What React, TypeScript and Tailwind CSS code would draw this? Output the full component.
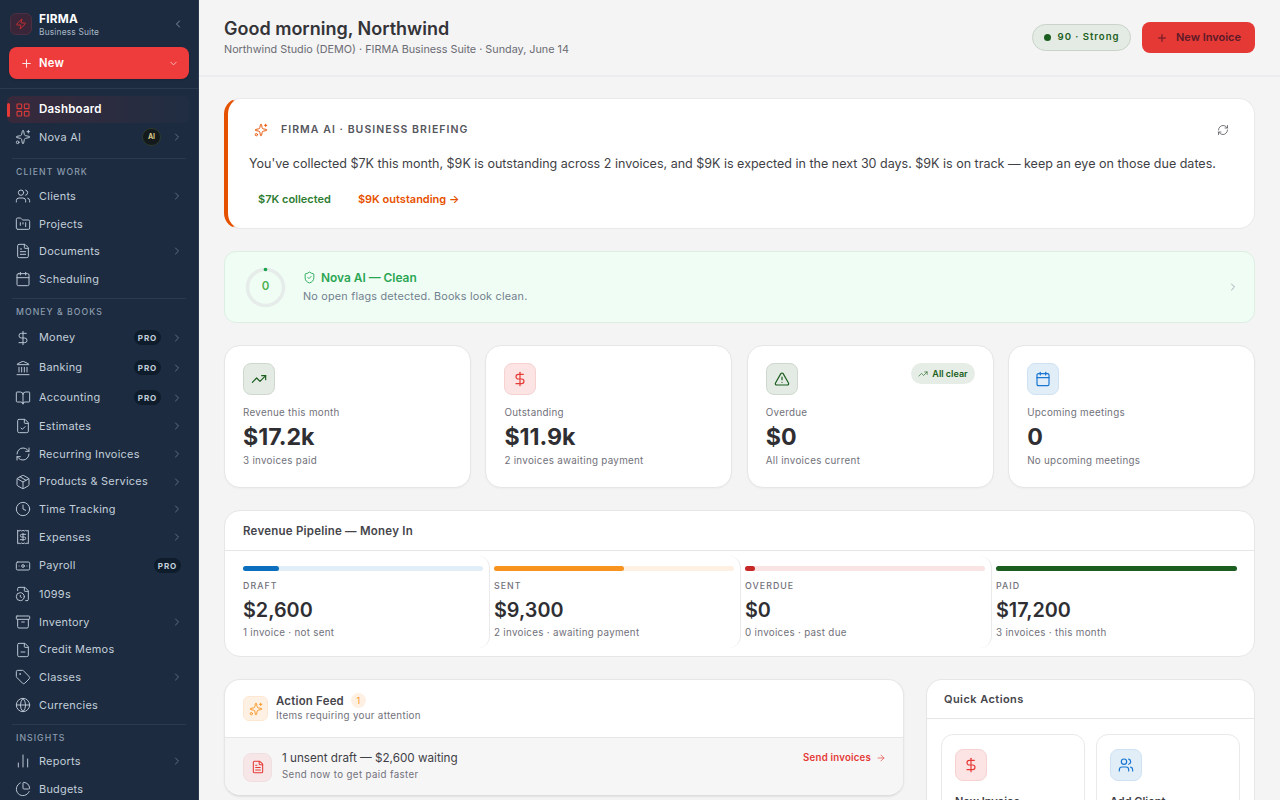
import {
  Archive, ArrowRight, Banknote, BookOpen, Calendar, ChartNoAxesColumn, ChevronDown, ChevronLeft, ChevronRight,
  Clock, DollarSign, FileCheck, FileClock, FileMinus, FileText, FolderKanban, Globe, Landmark, LayoutGrid, Package,
  PieChart, Plus, Receipt, RefreshCw, ShieldCheck, Sparkles, Tag, TrendingUp, TriangleAlert, Users, Zap,
} from 'lucide-react';

const CLIENT_WORK = [
  { label: 'Clients', icon: Users, more: true },
  { label: 'Projects', icon: FolderKanban },
  { label: 'Documents', icon: FileText, more: true },
  { label: 'Scheduling', icon: Calendar },
];

const MONEY_BOOKS = [
  { label: 'Money', icon: DollarSign, more: true, pro: true },
  { label: 'Banking', icon: Landmark, more: true, pro: true },
  { label: 'Accounting', icon: BookOpen, more: true, pro: true },
  { label: 'Estimates', icon: FileCheck, more: true },
  { label: 'Recurring Invoices', icon: RefreshCw, more: true },
  { label: 'Products & Services', icon: Package, more: true },
  { label: 'Time Tracking', icon: Clock, more: true },
  { label: 'Expenses', icon: Receipt, more: true },
  { label: 'Payroll', icon: Banknote, pro: true },
  { label: '1099s', icon: FileClock },
  { label: 'Inventory', icon: Archive, more: true },
  { label: 'Credit Memos', icon: FileMinus },
  { label: 'Classes', icon: Tag, more: true },
  { label: 'Currencies', icon: Globe },
];

const INSIGHTS = [
  { label: 'Reports', icon: ChartNoAxesColumn, more: true },
  { label: 'Budgets', icon: PieChart },
];

const PIPELINE = [
  { label: 'DRAFT', value: '$2,600', note: '1 invoice · not sent', bar: 'bg-[#0b6fbd]', track: 'bg-[#e1eef8]', width: '15%' },
  { label: 'SENT', value: '$9,300', note: '2 invoices · awaiting payment', bar: 'bg-[#f7931e]', track: 'bg-[#fef1e4]', width: '54%' },
  { label: 'OVERDUE', value: '$0', note: '0 invoices · past due', bar: 'bg-[#c62828]', track: 'bg-[#f9e3e3]', width: '4%' },
  { label: 'PAID', value: '$17,200', note: '3 invoices · this month', bar: 'bg-[#1b5e20]', track: 'bg-[#e4ece4]', width: '100%' },
];

type NavItem = { label: string; icon: typeof Users; more?: boolean; pro?: boolean };

function NavRow({ item }: { item: NavItem }) {
  const Icon = item.icon;
  return (
    <div className={`flex items-center pl-[15px] pr-[15px] ${item.pro ? 'h-[30px]' : 'h-[27.6px]'}`}>
      <Icon size={16} strokeWidth={1.5} className="text-[#b9c6d4] shrink-0" />
      <span className="ml-2 flex-1 text-[10.9px] tracking-[0.025em] text-[#c3cfdb]">{item.label}</span>
      {item.pro && (
        <span className={`h-[15px] w-[27px] flex items-center justify-center rounded-full bg-[#0f1c2c] text-[8px] font-bold tracking-[0.12em] text-[#c3cfdb] ${item.more ? '' : 'mr-[2px]'}`}>
          PRO
        </span>
      )}
      {item.more && <ChevronRight size={12} strokeWidth={1.5} className="ml-[10px] text-[#75859a] shrink-0" />}
    </div>
  );
}

function SectionLabel({ children, height }: { children: string; height: string }) {
  return (
    <div className={`pt-[8px] pl-[16px] ${height}`}>
      <div className="text-[8.7px] font-medium tracking-[0.12em] leading-[11px] text-[#8b9bae]">{children}</div>
    </div>
  );
}

function Divider({ gap }: { gap: string }) {
  return <div className={`mx-[12px] h-px bg-[#2a3a4f] ${gap}`} />;
}

function Sidebar() {
  return (
    <aside className="w-[199px] h-full shrink-0 overflow-hidden bg-[#1c2b3f] border-r border-[#2a3a4f]">
      <div className="h-[89px] border-b border-[#2a3a4f] px-[9px] pt-[12px]">
        <div className="flex items-center h-[24px]">
          <div className="ml-px w-[22px] h-[22px] rounded-md bg-[#3a2638] border border-[#4c2f42] flex items-center justify-center">
            <Zap size={12} strokeWidth={1.8} className="text-[#d32f2f]" />
          </div>
          <div className="ml-[7px] flex-1 pt-[3px]">
            <div className="text-[11.8px] leading-[13px] font-bold tracking-[0.02em] text-white">FIRMA</div>
            <div className="text-[8.4px] leading-[13px] tracking-[0.02em] text-[#a9b7c6]">Business Suite</div>
          </div>
          <ChevronLeft size={12} strokeWidth={1.8} className="mr-[5px] text-[#8c9bad]" />
        </div>
        <div className="mt-[11px] h-[32px] rounded-lg bg-[#ee3b3b] flex items-center pl-[11px] pr-[10px] shadow-sm">
          <Plus size={13} strokeWidth={2} className="text-[#fde4e4]" />
          <span className="ml-[6px] flex-1 text-[11.2px] font-semibold tracking-[0.02em] text-white">New</span>
          <ChevronDown size={11} strokeWidth={1.8} className="text-[#fbd0d0]" />
        </div>
      </div>
      <div className="relative mt-[7px] ml-[7px] mr-[8px] h-[27px] flex items-center rounded-md bg-gradient-to-r from-[#38293b] to-[#1f2d42] pl-[9px]">
        <span className="absolute left-0 top-[7px] bottom-[6px] w-[2.5px] rounded-sm bg-[#e53935]" />
        <LayoutGrid size={16} strokeWidth={1.7} className="ml-[-1px] text-[#d93a3a]" />
        <span className="ml-2 text-[11.5px] font-semibold tracking-[0.02em] text-white">Dashboard</span>
      </div>
      <div className="flex items-center h-[28px] pl-[15px] pr-[15px]">
        <Sparkles size={16} strokeWidth={1.5} className="text-[#b9c6d4]" />
        <span className="ml-2 flex-1 text-[10.9px] tracking-[0.025em] text-[#c3cfdb]">Nova AI</span>
        <span className="w-[19px] h-[18px] rounded-full bg-[#141a1c] border border-[#2c3a2f] flex items-center justify-center text-[7px] font-bold text-[#d8c68a]">AI</span>
        <ChevronRight size={12} strokeWidth={1.5} className="ml-[10px] text-[#75859a]" />
      </div>
      <Divider gap="mt-[7px]" />
      <SectionLabel height="h-[23.4px]">CLIENT WORK</SectionLabel>
      {CLIENT_WORK.map((item) => <NavRow key={item.label} item={item} />)}
      <Divider gap="mt-[5.5px]" />
      <SectionLabel height="h-[23.3px]">MONEY &amp; BOOKS</SectionLabel>
      {MONEY_BOOKS.map((item) => <NavRow key={item.label} item={item} />)}
      <Divider gap="mt-[5px]" />
      <SectionLabel height="h-[23px]">INSIGHTS</SectionLabel>
      {INSIGHTS.map((item) => <NavRow key={item.label} item={item} />)}
    </aside>
  );
}

function StatCard({ icon, tint, label, value, note, badge }: { icon: React.ReactNode; tint: string; label: string; value: string; note: string; badge?: boolean }) {
  return (
    <div className="h-[143px] rounded-2xl bg-white border border-[#e6e6e8] px-[18px] pt-[17px] shadow-[0_1px_2px_rgba(0,0,0,0.03)]">
      <div className="flex items-start justify-between">
        <div className={`w-[32px] h-[32px] rounded-lg border flex items-center justify-center ${tint}`}>{icon}</div>
        {badge && (
          <span className="h-[21px] pl-[7px] pr-[7px] rounded-full bg-[#e6ede6] flex items-center gap-[4px] text-[9px] font-semibold text-[#1b5e20]">
            <TrendingUp size={10} strokeWidth={1.5} />
            All clear
          </span>
        )}
      </div>
      <div className="mt-[11px] text-[9.8px] leading-[14px] tracking-[0.03em] text-[#71717a]">{label}</div>
      <div className="mt-[2px] text-[23.2px] leading-[30px] font-bold text-[#2f2f33]">{value}</div>
      <div className="mt-[2px] text-[9.8px] leading-[14px] tracking-[0.03em] text-[#71717a]">{note}</div>
    </div>
  );
}

export default function App() {
  return (
    <div className="flex h-screen w-full overflow-hidden bg-[#f4f4f5] font-['Inter',sans-serif]">
      <Sidebar />
      <main className="flex-1 min-w-0 h-full overflow-hidden">
        <header className="h-[77px] border-b-2 border-[#ececee] pl-[25px] pr-[25px] flex items-center justify-between">
          <div className="-mt-[2px]">
            <h1 className="text-[18px] leading-[25px] font-semibold text-[#333338]">Good morning, Northwind</h1>
            <p className="mt-[1px] text-[10.8px] leading-[16px] text-[#6b6b72]">Northwind Studio (DEMO) · FIRMA Business Suite · Sunday, June 14</p>
          </div>
          <div className="flex items-center gap-[11px]">
            <div className="h-[27px] w-[99px] rounded-full bg-[#e4ebe4] border border-[#c9d3c9] flex items-center justify-center gap-[7px]">
              <span className="w-[7px] h-[7px] rounded-full bg-[#1b5e20]" />
              <span className="text-[9.6px] font-semibold tracking-[0.1em] text-[#1b5e20]">90 · Strong</span>
            </div>
            <div className="h-[31px] w-[113px] rounded-lg bg-[#e53935] flex items-center justify-center gap-[8px]">
              <Plus size={12} strokeWidth={2} className="text-[#5c1a28]" />
              <span className="text-[11px] font-semibold text-[#5c1a28]">New Invoice</span>
            </div>
          </div>
        </header>

        <div className="px-[25px] pt-[21px] flex flex-col gap-[22px]">
          <section className="h-[131px] rounded-2xl bg-white border border-[#e9e9eb] border-l-[4px] border-l-[#e65100] pl-[21px] pr-[24px] pt-[22px]">
            <div className="flex items-center justify-between h-[18px]">
              <div className="flex items-center">
                <Sparkles size={14} strokeWidth={1.6} className="ml-[5px] text-[#e65100]" />
                <span className="ml-[13px] text-[10.5px] font-semibold tracking-[0.1em] text-[#55555c]">FIRMA AI · BUSINESS BRIEFING</span>
              </div>
              <RefreshCw size={12} strokeWidth={1.6} className="mr-[1px] text-[#55555c]" />
            </div>
            <p className="mt-[15px] text-[12.53px] leading-[20px] whitespace-nowrap text-[#3f3f46]">You've collected $7K this month, $9K is outstanding across 2 invoices, and $9K is expected in the next 30 days. $9K is on track — keep an eye on those due dates.</p>
            <div className="mt-[17px] pl-[9px] flex gap-[27px] text-[11px] font-semibold">
              <span className="text-[#2e7d32]">$7K collected</span>
              <span className="text-[#e65100]">$9K outstanding →</span>
            </div>
          </section>

          <section className="h-[72px] rounded-xl bg-[#f0fdf4] border border-[#dcefe2] flex items-center pl-[20px] pr-[15px]">
            <div className="relative w-[41px] h-[41px]">
              <svg viewBox="0 0 41 41" className="w-[41px] h-[41px]">
                <circle cx="20.5" cy="20.5" r="18" fill="none" stroke="#e5ece9" strokeWidth="3.5" />
                <circle cx="20.5" cy="2.5" r="1.8" fill="#16a34a" />
              </svg>
              <span className="absolute inset-0 flex items-center justify-center text-[11.5px] font-semibold text-[#4caf50]">0</span>
            </div>
            <div className="ml-[17px] flex-1">
              <div className="flex items-center h-[18px]">
                <ShieldCheck size={13} strokeWidth={1.6} className="text-[#16a34a]" />
                <span className="ml-[5px] text-[11.9px] font-semibold text-[#2aa653]">Nova AI — Clean</span>
              </div>
              <div className="mt-[1px] text-[10.8px] leading-[18px] tracking-[0.02em] text-[#71808f]">No open flags detected. Books look clean.</div>
            </div>
            <ChevronRight size={12} strokeWidth={1.6} className="text-[#8a97a5]" />
          </section>

          <section className="grid grid-cols-4 gap-[14.5px]">
            <StatCard tint="bg-[#e4ebe4] border-[#cfd8cf]" icon={<TrendingUp size={16} strokeWidth={1.8} className="text-[#1b5e20]" />} label="Revenue this month" value="$17.2k" note="3 invoices paid" />
            <StatCard tint="bg-[#fce4e4] border-[#f6d2d2]" icon={<DollarSign size={16} strokeWidth={1.8} className="text-[#e53935]" />} label="Outstanding" value="$11.9k" note="2 invoices awaiting payment" />
            <StatCard badge tint="bg-[#e4ebe4] border-[#cfd8cf]" icon={<TriangleAlert size={16} strokeWidth={1.8} className="text-[#1b5e20]" />} label="Overdue" value="$0" note="All invoices current" />
            <StatCard tint="bg-[#e1eef8] border-[#cfe2f3]" icon={<Calendar size={16} strokeWidth={1.8} className="text-[#1976d2]" />} label="Upcoming meetings" value="0" note="No upcoming meetings" />
          </section>

          <section className="h-[147px] rounded-2xl bg-white border border-[#e6e6e8] overflow-hidden">
            <div className="h-[40px] border-b border-[#e6e6e8] pl-[18px] pt-[2px] flex items-center text-[11.5px] font-semibold tracking-[0.02em] text-[#45454b]">
              Revenue Pipeline — Money In
            </div>
            <div className="grid grid-cols-4 gap-[4px] ml-[18px] mr-[11px] mt-[5px] h-[92px]">
              {PIPELINE.map((p, i) => (
                <div key={p.label} className={`pt-[10px] pr-[6px] ${i < 3 ? 'border-r border-[#e9e9eb] rounded-r-xl' : ''}`}>
                  <div className={`h-[5px] rounded-full ${p.track}`}>
                    <div className={`h-full rounded-full ${p.bar}`} style={{ width: p.width }} />
                  </div>
                  <div className="mt-[9px] text-[8.8px] leading-[12px] font-medium tracking-[0.12em] text-[#71717a]">{p.label}</div>
                  <div className="mt-[5px] text-[19.8px] leading-[26px] font-semibold text-[#2f2f33]">{p.value}</div>
                  <div className="mt-[3px] text-[9.8px] leading-[14px] tracking-[0.03em] text-[#71717a]">{p.note}</div>
                </div>
              ))}
            </div>
          </section>

          <section className="grid grid-cols-[680px_1fr] gap-[22px] items-start">
            <div className="h-[117px] rounded-2xl bg-white border border-[#e6e6e8] border-b-[#dcdcde] overflow-hidden shadow-[0_1px_2px_rgba(0,0,0,0.08)]">
              <div className="h-[58px] border-b border-[#e6e6e8] pl-[18px] flex items-center">
                <div className="w-[25px] h-[25px] rounded-md bg-[#fef1e4] border border-[#fde7d2] flex items-center justify-center">
                  <Sparkles size={14} strokeWidth={1.6} className="text-[#f7931e]" />
                </div>
                <div className="ml-[8px] -mt-[2px]">
                  <div className="flex items-center">
                    <span className="text-[11.4px] leading-[16px] font-semibold tracking-[0.02em] text-[#45454b]">Action Feed</span>
                    <span className="ml-[7px] w-[15px] h-[15px] rounded-full bg-[#fef1e4] flex items-center justify-center text-[9px] text-[#f7931e]">1</span>
                  </div>
                  <div className="text-[9.8px] leading-[14px] tracking-[0.03em] text-[#71717a]">Items requiring your attention</div>
                </div>
              </div>
              <div className="h-[58px] bg-[#f6f6f7] pl-[18px] pr-[17px] flex items-center">
                <div className="w-[29px] h-[29px] rounded-lg bg-[#f6e6e7] border border-[#f0dfe0] flex items-center justify-center">
                  <FileText size={14} strokeWidth={1.8} className="text-[#e53935]" />
                </div>
                <div className="ml-[10px] flex-1 -mt-[2px]">
                  <div className="text-[11.7px] leading-[17px] text-[#3f3f46]">1 unsent draft — $2,600 waiting</div>
                  <div className="text-[9.7px] leading-[15px] tracking-[0.04em] text-[#71717a]">Send now to get paid faster</div>
                </div>
                <span className="-mt-[18px] flex items-center gap-[5px] text-[9.7px] font-semibold tracking-[0.02em] text-[#e53935]">
                  Send invoices <ArrowRight size={10} strokeWidth={1.6} />
                </span>
              </div>
            </div>

            <div className="rounded-t-2xl bg-white border border-[#e6e6e8] border-b-0 h-[140px]">
              <div className="h-[39px] border-b border-[#e6e6e8] pl-[17px] flex items-center text-[11px] font-semibold tracking-[0.04em] text-[#45454b]">
                Quick Actions
              </div>
              <div className="grid grid-cols-2 gap-[11px] px-[14px] pt-[15px]">
                <div className="h-[120px] rounded-xl border border-[#e9e9eb] pl-[13px] pt-[14px]">
                  <div className="w-[32px] h-[32px] rounded-lg bg-[#fce4e4] border border-[#f6d2d2] flex items-center justify-center">
                    <DollarSign size={16} strokeWidth={1.8} className="text-[#e53935]" />
                  </div>
                  <div className="mt-[12px] text-[11px] font-semibold text-[#3f3f46]">New Invoice</div>
                </div>
                <div className="h-[120px] rounded-xl border border-[#e9e9eb] pl-[13px] pt-[14px]">
                  <div className="w-[32px] h-[32px] rounded-lg bg-[#e1eef8] border border-[#cfe2f3] flex items-center justify-center">
                    <Users size={16} strokeWidth={1.8} className="text-[#1976d2]" />
                  </div>
                  <div className="mt-[12px] text-[11px] font-semibold text-[#3f3f46]">Add Client</div>
                </div>
              </div>
            </div>
          </section>
        </div>
      </main>
    </div>
  );
}
